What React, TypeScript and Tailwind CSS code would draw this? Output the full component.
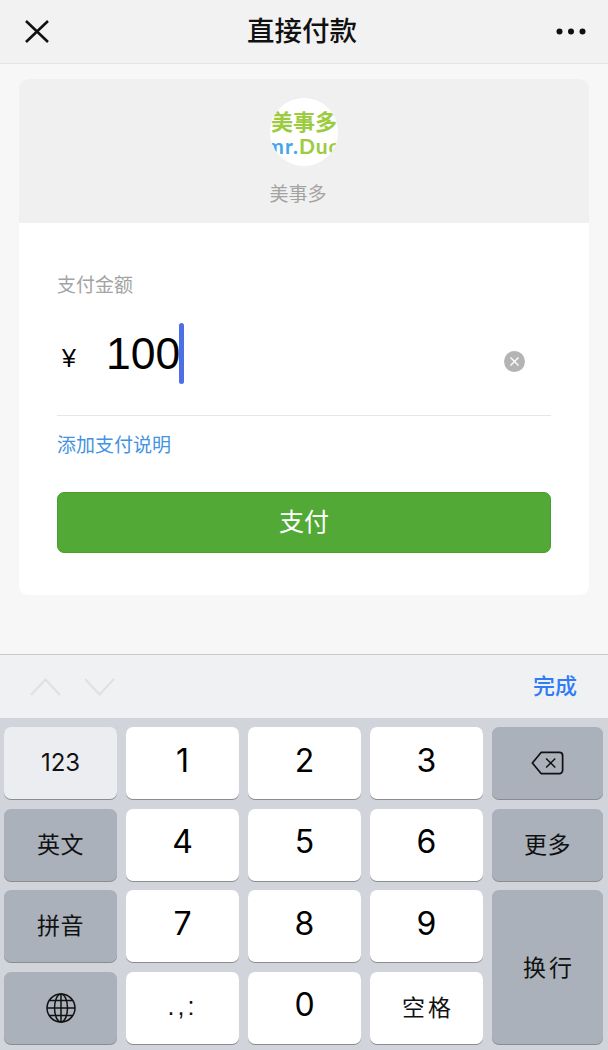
import React from 'react';

const font = "font-['Liberation_Sans','Noto_Sans_CJK_SC',sans-serif]";

function Key({ children, kind = 'light', className = '' }: { children: React.ReactNode; kind?: 'light' | 'dark' | 'pale'; className?: string }) {
  const bg = kind === 'light' ? 'bg-white' : kind === 'dark' ? 'bg-[#abb1bb]' : 'bg-[#ebedf1]';
  return (
    <div className={`flex items-center justify-center rounded-[7px] text-black shadow-[0_1px_0_#8a8c90] ${bg} ${className}`}>
      {children}
    </div>
  );
}

function Digit({ n }: { n: string }) {
  return (
    <Key>
      <span className="font-['Inter',sans-serif] font-normal text-[32px] leading-none -mt-[5px]">{n}</span>
    </Key>
  );
}

function Label({ text }: { text: string }) {
  return <span className="text-[23px] tracking-[0.5px] leading-none text-[#111] mt-[1px]">{text}</span>;
}

function WideLabel({ text }: { text: string }) {
  return <span className="text-[23px] tracking-[3px] leading-none text-[#111] mt-[2px] ml-[3px]">{text}</span>;
}

export default function App() {
  return (
    <div className={`${font} w-[608px] h-[1050px] flex flex-col overflow-hidden bg-[#f7f7f7]`}>
      {/* Nav bar */}
      <header className="h-[64px] shrink-0 flex items-center justify-between pl-[25px] pr-[22px] bg-[#f2f2f2] border-b border-[#e4e4e4]">
        <svg width="24" height="23" viewBox="0 0 24 23" fill="none" stroke="#111" strokeWidth="2.6">
          <path d="M1 1 L23 22 M23 1 L1 22" />
        </svg>
        <h1 className="text-[27.5px] font-medium leading-none text-[#111] -ml-[1px]">直接付款</h1>
        <svg width="30" height="7" viewBox="0 0 30 7" fill="#111">
          <circle cx="3.5" cy="3.5" r="3" />
          <circle cx="15" cy="3.5" r="3" />
          <circle cx="26.5" cy="3.5" r="3" />
        </svg>
      </header>

      {/* Page */}
      <main className="flex-1 px-[19px] pt-[15px]">
        <div className="rounded-[9px] overflow-hidden bg-white">
          <div className="h-[144px] bg-[#f0f0f0] flex flex-col items-center pt-[19px]">
            <div className="w-[68px] h-[68px] rounded-full bg-white overflow-hidden flex flex-col items-center shrink-0">
              <span className="mt-[13px] text-[22px] leading-[24px] font-bold text-[#9ccb3f] whitespace-nowrap">美事多</span>
              <span className="mt-[0px] text-[21px] tracking-[1px] leading-[22px] font-['Lato',sans-serif] font-bold whitespace-nowrap">
                <span className="text-[#45a5ec]">mr.</span>
                <span className="text-[#9ccb3f]">Duo</span>
              </span>
            </div>
            <span className="mt-[18px] -ml-[12px] text-[19px] leading-[22px] text-[#a3a3a3]">美事多</span>
          </div>

          <div className="h-[372px] px-[38px] pt-[52px]">
            <p className="text-[19px] leading-[22px] text-[#a3a3a3]">支付金额</p>

            <div className="h-[119px] flex items-center border-b border-[#e6e6e6]">
              <span className="ml-[5px] w-[44px] text-[25px] leading-none text-black mt-[4px]">¥</span>
              <span className="text-[44.5px] leading-none text-black -mt-[3px]">100</span>
              <span className="w-[4.5px] h-[61px] -ml-[1px] rounded-full bg-[#4c6fe6] -mt-[5px]" />
              <span className="ml-auto mr-[26px] mt-[11px] w-[21px] h-[21px] rounded-full bg-[#b4b4b4] flex items-center justify-center">
                <svg width="9" height="9" viewBox="0 0 9 9" stroke="#fff" strokeWidth="1.4">
                  <path d="M0.5 0.5 L8.5 8.5 M8.5 0.5 L0.5 8.5" />
                </svg>
              </span>
            </div>

            <p className="mt-[19px] text-[19px] leading-[22px] text-[#4293e2]">添加支付说明</p>

            <button className="mt-[35px] w-full h-[61px] rounded-[7px] bg-[#52a936] border border-[#4a9e30] text-white text-[25px] leading-none">
              支付
            </button>
          </div>
        </div>
      </main>

      {/* Keyboard accessory */}
      <div className="h-[64px] shrink-0 flex items-center pl-[30px] pr-[31px] bg-[#f0f1f3] border-t border-[#c9cacc]">
        <svg width="31" height="18" viewBox="0 0 31 18" fill="none" stroke="#dfe0e3" strokeWidth="2">
          <path d="M1 17 L15.5 1.5 L30 17" />
        </svg>
        <svg className="ml-[23px]" width="31" height="18" viewBox="0 0 31 18" fill="none" stroke="#dfe0e3" strokeWidth="2">
          <path d="M1 1 L15.5 16.5 L30 1" />
        </svg>
        <span className="ml-auto text-[22px] leading-none font-medium text-[#2f7cf6]">完成</span>
      </div>

      {/* Keyboard */}
      <div className="h-[332px] shrink-0 pt-[9px] pl-[4px] bg-[#d1d4da] grid grid-cols-[113px_113px_113px_113px_111px] grid-rows-[72px_72px_72px_72px] gap-x-[9px] gap-y-[9.67px]">
        <Key kind="pale">
          <span className="font-['Inter',sans-serif] font-normal text-[24px] leading-none text-[#111]">123</span>
        </Key>
        <Digit n="1" />
        <Digit n="2" />
        <Digit n="3" />
        <Key kind="dark">
          <svg width="33" height="24" viewBox="0 0 36 26" fill="none" stroke="#111" strokeWidth="1.9" strokeLinejoin="round">
            <path d="M11 1.5 H31 a3.5 3.5 0 0 1 3.5 3.5 V21 a3.5 3.5 0 0 1 -3.5 3.5 H11 L1.5 13 Z" />
            <path d="M16.5 8 L26.5 18 M26.5 8 L16.5 18" strokeWidth="1.6" />
          </svg>
        </Key>

        <Key kind="dark"><Label text="英文" /></Key>
        <Digit n="4" />
        <Digit n="5" />
        <Digit n="6" />
        <Key kind="dark"><Label text="更多" /></Key>

        <Key kind="dark"><Label text="拼音" /></Key>
        <Digit n="7" />
        <Digit n="8" />
        <Digit n="9" />
        <Key kind="dark" className="row-span-2"><WideLabel text="换行" /></Key>

        <Key kind="dark">
          <svg width="30" height="30" viewBox="0 0 30 30" fill="none" stroke="#111" strokeWidth="1.5">
            <circle cx="15" cy="15" r="14" />
            <ellipse cx="15" cy="15" rx="6.5" ry="14" />
            <path d="M15 1 V29 M1 15 H29 M3.5 7.5 H26.5 M3.5 22.5 H26.5" />
          </svg>
        </Key>
        <Key>
          <span className="text-[25px] leading-none tracking-[3px] text-[#111] -mt-[2px]">.,:</span>
        </Key>
        <Digit n="0" />
        <Key><WideLabel text="空格" /></Key>
      </div>
    </div>
  );
}
